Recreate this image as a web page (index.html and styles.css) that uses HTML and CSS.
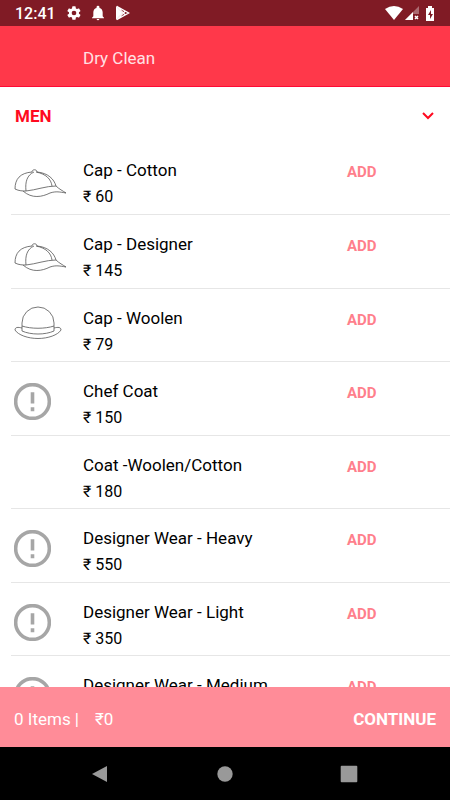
FILE: index.html
```html
<!DOCTYPE html>
<html lang="en">
<head>
<meta charset="utf-8">
<meta name="viewport" content="width=device-width, initial-scale=1">
<title>Dry Clean</title>
<link rel="stylesheet" href="styles.css">
</head>
<body>
<svg class="sprite" aria-hidden="true">
  <symbol id="cap" viewBox="0 0 54 30">
    <path d="M1 20C1 10 6 4 18 3M18 3C18 0 23 0 23 3M23 3C34 4 40 10 42 17M22 3C32 5 37 10 38 17M20 3C13 6 11 13 12 22M1 20C5 22 9 22 12 22C22 21 32 17 42 17C45 20 49 22 52 24C46 23 42 22 36 24C28 28 18 30 9 22"/>
  </symbol>
  <symbol id="bowler" viewBox="0 0 48 34">
    <path d="M8 25V17A16 16 0 0 1 40 17V25M8 20C17 23 31 23 40 20M8 25C17 29 31 29 40 25M8 22C4 21 1 21 1 24C4 29 14 32.500 24 32.500S44 29 47 24C47 21 44 21 40 22"/>
  </symbol>
  <symbol id="alert" viewBox="0 0 36 36">
    <circle cx="18" cy="18" r="16.400"/>
    <path d="M18 9V20M18 23.500V27.500"/>
  </symbol>
</svg>
<div class="status">
  <span class="clock">12:41</span>
  <svg class="glyph" viewBox="0 0 24 24" aria-hidden="true"><path d="M19.400 13a7.500 7.500 0 0 0 0-2l2.100-1.600a.5.5 0 0 0 .1-.7l-2-3.400a.5.5 0 0 0-.6-.2l-2.500 1a7 7 0 0 0-1.700-1l-.4-2.600a.5.5 0 0 0-.5-.5h-4a.5.5 0 0 0-.5.5L9 5.100a7 7 0 0 0-1.700 1l-2.500-1a.5.5 0 0 0-.6.200l-2 3.400a.5.5 0 0 0 .1.700L4.500 11a7.500 7.500 0 0 0 0 2l-2.200 1.600a.5.5 0 0 0-.1.700l2 3.400c.1.200.4.300.6.200l2.500-1a7 7 0 0 0 1.700 1l.4 2.600c0 .300.200.5.5.5h4c.3 0 .5-.2.5-.5l.4-2.600a7 7 0 0 0 1.700-1l2.500 1c.2.100.5 0 .6-.2l2-3.400a.5.5 0 0 0-.1-.7zM12 15.500a3.500 3.500 0 1 1 0-7 3.500 3.500 0 0 1 0 7z"/></svg>
  <svg class="glyph" viewBox="0 0 24 24" aria-hidden="true"><path d="M12 23a2 2 0 0 0 2-2h-4a2 2 0 0 0 2 2zm7-6v-6c0-3.200-1.700-5.900-4.800-6.600V3.200a2.200 2.200 0 0 0-4.400 0v1.200C6.700 5.100 5 7.800 5 11v6l-2 2v1h18v-1z"/></svg>
  <svg class="glyph" viewBox="0 0 24 24" aria-hidden="true"><path d="M3 2v20L13 12z"/><path class="play" d="M4 2L22 12 4 22M4 2L17 15M4 22L17 9"/></svg>
  <span class="spacer"></span>
  <svg class="wifi" viewBox="0 0 18 14" aria-hidden="true"><path d="M0 3Q9-3 18 3L9 14z"/></svg>
  <svg class="signal" viewBox="0 0 14 14" aria-hidden="true"><path class="dim" d="M14 0v8H8v6H0z"/><path d="M0 14L8 6v8z"/><path class="cross" d="M10 10l3 3M13 10l-3 3"/></svg>
  <svg class="battery" viewBox="0 0 10 15" aria-hidden="true"><path d="M3 0h4v2h2v13H1V2h2z"/><path class="bolt" d="M6 4L3 9h2v4l3-5H6z"/></svg>
</div>
<header class="appbar"><h1>Dry Clean</h1></header>
<main class="content">
  <button class="section" type="button" aria-expanded="true">MEN
    <svg class="chevron" viewBox="0 0 12 8" aria-hidden="true"><path d="M1 1l5 5 5-5"/></svg>
  </button>
  <ul class="items">
    <li class="item"><svg class="cap"><use href="#cap"/></svg><div class="info"><h2>Cap - Cotton</h2><p>₹ 60</p></div><button class="add" type="button">ADD</button></li>
    <li class="item"><svg class="cap"><use href="#cap"/></svg><div class="info"><h2>Cap - Designer</h2><p>₹ 145</p></div><button class="add" type="button">ADD</button></li>
    <li class="item"><svg class="bowler"><use href="#bowler"/></svg><div class="info"><h2>Cap - Woolen</h2><p>₹ 79</p></div><button class="add" type="button">ADD</button></li>
    <li class="item"><svg class="alert"><use href="#alert"/></svg><div class="info"><h2>Chef Coat</h2><p>₹ 150</p></div><button class="add" type="button">ADD</button></li>
    <li class="item"><div class="info"><h2>Coat -Woolen/Cotton</h2><p>₹ 180</p></div><button class="add" type="button">ADD</button></li>
    <li class="item"><svg class="alert"><use href="#alert"/></svg><div class="info"><h2>Designer Wear - Heavy</h2><p>₹ 550</p></div><button class="add" type="button">ADD</button></li>
    <li class="item"><svg class="alert"><use href="#alert"/></svg><div class="info"><h2>Designer Wear - Light</h2><p>₹ 350</p></div><button class="add" type="button">ADD</button></li>
    <li class="item"><svg class="alert"><use href="#alert"/></svg><div class="info"><h2>Designer Wear - Medium</h2></div><button class="add" type="button">ADD</button></li>
  </ul>
</main>
<footer class="cart">
  <span>0 Items |</span><span class="total">₹0</span>
  <button class="continue" type="button">CONTINUE</button>
</footer>
<nav class="keys" aria-label="System">
  <button type="button" aria-label="Back"><svg viewBox="0 0 18 18"><path d="M15 1v16L0 9z"/></svg></button>
  <button type="button" aria-label="Home"><svg viewBox="0 0 18 18"><circle cx="9" cy="9" r="7.700"/></svg></button>
  <button type="button" aria-label="Recent apps"><svg viewBox="0 0 18 18"><rect x="0.700" y="0.700" width="16.600" height="16.600" rx="1"/></svg></button>
</nav>
</body>
</html>
```
FILE: styles.css
```css
* { box-sizing: border-box; }

body {
  margin: 0;
  height: 100vh;
  display: flex;
  flex-direction: column;
  background: #fff;
  color: #000;
  font-family: Roboto, "Liberation Sans", sans-serif;
}

h1, h2, p, ul { margin: 0; padding: 0; font-weight: 400; }

button {
  margin: 0;
  padding: 0;
  border: 0;
  background: none;
  font-family: inherit;
  text-align: left;
}

.sprite { display: none; }

.status {
  flex: none;
  display: flex;
  align-items: center;
  height: 26px;
  padding: 0 15px;
  background: #801b25;
  color: #fff;
  fill: #fff;
}
.clock { width: 51px; padding-top: 2px; font-size: 16px; font-weight: 500; line-height: 24px; }
.glyph { width: 16px; height: 16px; margin-right: 8px; }
.play { fill: none; stroke: #fff; stroke-width: 2; }
.spacer { flex: 1; }
.wifi { width: 18px; height: 14px; }
.signal { width: 14px; height: 14px; margin: 0 6px 0 2px; }
.dim { opacity: 0.35; }
.cross { fill: none; stroke: #fff; stroke-width: 1.5; }
.battery { width: 10px; height: 15px; }
.bolt { fill: #801b25; }

.appbar {
  flex: none;
  display: flex;
  align-items: center;
  height: 61px;
  padding: 4px 16px 0 83px;
  border-bottom: 1px solid #ff0a35;
  background: #ff384a;
  color: #ffe1e4;
}
.appbar h1 { font-size: 17px; line-height: 24px; }

.content { flex: 1; min-height: 0; overflow: hidden; }

.section {
  display: flex;
  align-items: center;
  justify-content: space-between;
  width: 100%;
  height: 54px;
  padding: 4px 16px 0 15px;
  color: #ff0a20;
  font-size: 17px;
  font-weight: 700;
  line-height: 24px;
}
.chevron { width: 12px; height: 8px; fill: none; stroke: #ff0a20; stroke-width: 2; }

.items { margin-left: 11px; list-style: none; }
.item {
  display: grid;
  grid-template-columns: 69px 1fr 103px;
  align-items: start;
  height: 74px;
  padding: 17px 0 0 3px;
  border-bottom: 1px solid #e6e6e6;
}
.item:nth-child(odd) { height: 73px; }
.item:first-child { height: 74px; }
.info { grid-column: 2; white-space: nowrap; }
.info h2 { font-size: 17px; line-height: 24px; }
.info p { padding-top: 5px; font-size: 16px; line-height: 20px; }
.add {
  grid-column: 3;
  padding-top: 4px;
  color: #ff7f8c;
  font-size: 15px;
  font-weight: 700;
  line-height: 20px;
}
.cap, .bowler, .alert { fill: none; grid-column: 1; }
.cap { width: 54px; height: 30px; margin-top: 11px; stroke: #555; stroke-width: 0.8; }
.bowler { width: 48px; height: 34px; stroke: #555; stroke-width: 0.8; }
.alert { width: 37px; height: 37px; margin-top: 4px; stroke: #a6a6a6; stroke-width: 3.5; }

.cart {
  flex: none;
  display: flex;
  align-items: center;
  height: 60px;
  padding: 3px 14px 0;
  background: #ff8c98;
  color: #fff;
  font-size: 17px;
  line-height: 24px;
}
.total { flex: 1; padding-left: 16px; }
.continue { color: #fff; font-size: 17px; font-weight: 700; line-height: 24px; }

.keys {
  flex: none;
  display: flex;
  align-items: center;
  justify-content: center;
  gap: 106px;
  height: 53px;
  background: #000;
  fill: #999;
}
.keys svg { display: block; width: 18px; height: 18px; }
```
